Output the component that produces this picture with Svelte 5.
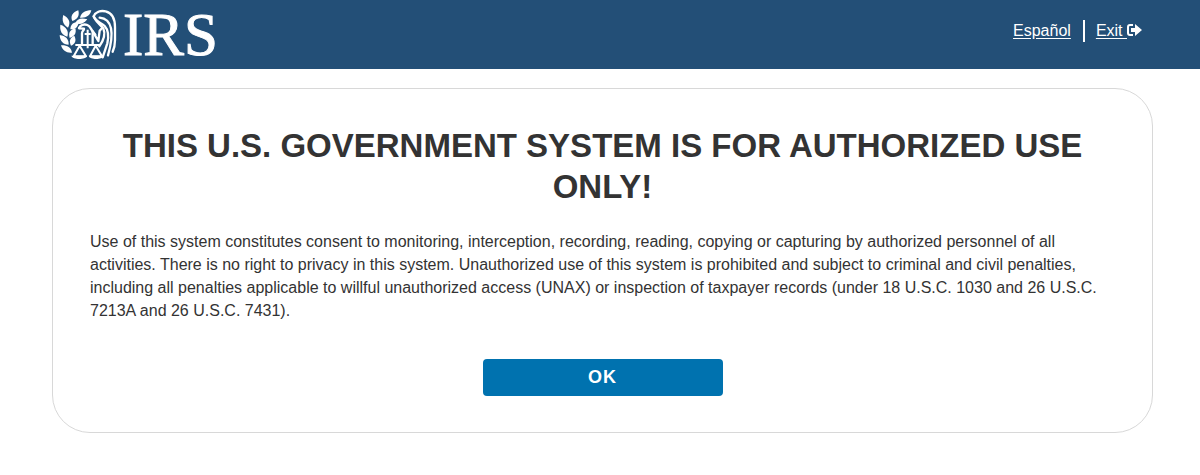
<script lang="ts">
  let accepted = false;

  const handleAccept = () => {
    accepted = true;
  };
</script>

<header class="header">
  <div class="brand" role="img" aria-label="IRS">
    <svg class="emblem" viewBox="0 0 168 156" aria-hidden="true">
      <!-- laurel branch -->
      <g fill="#fff">
        <path d="M60 26C64 10 76 4 94 4 90 20 78 28 60 26Z" />
        <path d="M37 36C30 22 38 10 55 4 59 20 53 31 37 36Z" />
        <path d="M46 43C52 28 64 26 82 31 72 44 60 48 46 43Z" />
        <path d="M24 56C9 47 5 34 10 18 27 27 33 40 24 56Z" />
        <path d="M31 61C31 46 40 39 56 38 55 53 46 62 31 61Z" />
        <path d="M22 83C5 78 -1 65 1 47 19 53 27 66 22 83Z" />
        <path d="M29 87C24 71 31 62 46 58 50 73 43 83 29 87Z" />
        <path d="M26 107C9 107 0 96 -1 78 17 80 27 91 26 107Z" />
        <path d="M33 110C26 96 30 86 43 80 50 94 46 104 33 110Z" />
        <path d="M36 131C20 133 8 125 3 109 21 108 33 115 36 131Z" />
      </g>
      <!-- eagle -->
      <g fill="none" stroke="#fff" stroke-width="7" stroke-linejoin="round" stroke-linecap="round">
        <path d="M57 57C61 48 72 44 82 48 92 52 92 60 98 67L106 77" />
        <path d="M58 58L72 59C73 64 66 65 66 73V104M98 69V104" />
        <path d="M101 22C106 9 121 4 137 7 155 11 165 28 165 55V94Q165 113 158 128" />
        <path d="M101 22C105 37 124 41 134 51 145 63 146 85 142 103L128 145" />
        <path d="M119 26C139 28 149 40 153 58 158 83 154 104 144 139" />
        <path d="M103 25C110 42 122 47 130 58 137 75 133 91 118 112" />
        <path d="M98 67L115 96 119 65 127 56" />
      </g>
      <!-- scales of justice -->
      <g fill="none" stroke="#fff" stroke-width="6" stroke-linejoin="round">
        <path d="M83 62V118M46 108H121M74 75H92" />
        <path d="M59 110L41 142H78ZM107 110L90 142H126Z" />
      </g>
      <path d="M34 140H81C78 153 38 153 34 140ZM86 140H131C127 153 90 153 86 140Z" fill="#fff" />
    </svg>
    <span class="brand-name">IRS</span>
  </div>

  <nav class="links" aria-label="Utility">
    <a class="link" href="#espanol" lang="es">Español</a>
    <a class="link exit" href="#exit">Exit&nbsp;<svg class="exit-icon" viewBox="0 0 15 12" aria-hidden="true">
        <path d="M6 1H3Q1 1 1 3V9Q1 11 3 11H6" fill="none" stroke="#fff" stroke-width="2" />
        <path d="M4 4H8V0L15 6 8 12V8H4Z" fill="#fff" />
      </svg></a>
  </nav>
</header>

<main class="card">
  <h1>THIS U.S. GOVERNMENT SYSTEM IS FOR AUTHORIZED USE ONLY!</h1>
  <p>
    Use of this system constitutes consent to monitoring, interception, recording, reading, copying
    or capturing by authorized personnel of all activities. There is no right to privacy in this
    system. Unauthorized use of this system is prohibited and subject to criminal and civil
    penalties, including all penalties applicable to willful unauthorized access (UNAX) or
    inspection of taxpayer records (under 18 U.S.C. 1030 and 26 U.S.C. 7213A and 26 U.S.C. 7431).
  </p>
  <button class="ok" type="button" aria-pressed={accepted} on:click={handleAccept}>OK</button>
</main>

<style>
  :global(body) {
    margin: 0;
    background: #fff;
    color: #333;
    font-family: "Liberation Sans", Arial, sans-serif;
  }

  .header {
    display: flex;
    align-items: center;
    justify-content: space-between;
    box-sizing: border-box;
    min-height: 69px;
    padding: 0 58px 0 60px;
    background: #234f77;
    color: #fff;
  }

  .brand {
    display: flex;
    align-items: center;
    gap: 7px;
  }

  .emblem {
    width: 56px;
    height: 52px;
    overflow: visible;
  }

  .brand-name {
    font-family: "Liberation Serif", "Times New Roman", serif;
    font-size: 61px;
    line-height: 68px;
    -webkit-text-stroke: 1px #fff;
  }

  .links {
    display: flex;
    align-items: center;
    padding-bottom: 8px;
  }

  .link {
    color: #fff;
    font-size: 16px;
    line-height: 22px;
    text-underline-offset: 2px;
  }

  .exit {
    margin-left: 12px;
    padding-left: 11px;
    border-left: 2px solid #fff;
  }

  .exit-icon {
    width: 15px;
    height: 12px;
  }

  .card {
    display: flex;
    flex-direction: column;
    align-items: center;
    margin: 19px 47px 0 52px;
    padding: 36px 37px;
    border: 1px solid #d8d8d8;
    border-radius: 38px;
  }

  h1 {
    margin: 0;
    font-size: 34px;
    line-height: 41px;
    text-align: center;
  }

  /* keeps the last word on its own line at desktop widths */
  @media (min-width: 1100px) {
    h1 {
      padding: 0 24px;
      font-size: 33px;
    }
  }

  p {
    margin: 23px 0 0;
    font-size: 16px;
    line-height: 23px;
  }

  .ok {
    width: 240px;
    max-width: 100%;
    height: 37px;
    margin-top: 37px;
    padding: 0;
    border: none;
    border-radius: 4px;
    background: #0072af;
    color: #fff;
    font: bold 18px "Liberation Sans", Arial, sans-serif;
    letter-spacing: 1px;
    cursor: pointer;
  }
</style>
